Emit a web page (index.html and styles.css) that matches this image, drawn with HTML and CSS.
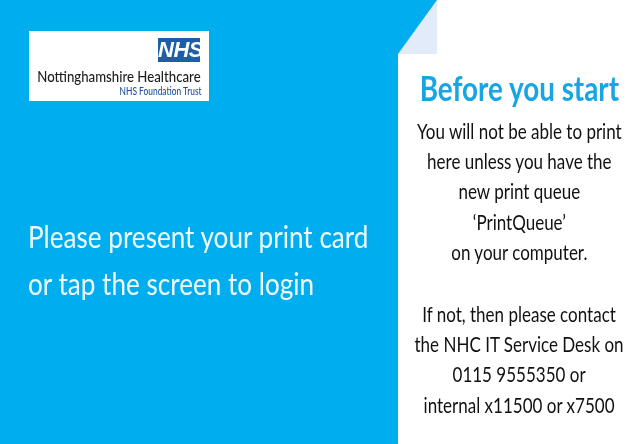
FILE: index.html
```html
<!DOCTYPE html>
<html lang="en">
<head>
<meta charset="utf-8">
<title>Print login</title>
<link rel="stylesheet" href="styles.css">
</head>
<body>
<main class="screen">
  <section class="login">
    <div class="logo">
      <div class="nhs-badge">NHS</div>
      <div class="logo-name">Nottinghamshire Healthcare</div>
      <div class="logo-sub">NHS Foundation Trust</div>
    </div>
    <p class="prompt">Please present your print card<br>or tap the screen to login</p>
  </section>
  <aside class="notice">
    <svg class="fold" width="39" height="54" viewBox="0 0 39 54" aria-hidden="true">
      <rect width="39" height="54" fill="#e2ebfa"/>
      <polygon points="0,0 39,0 0,54" fill="#00aeef"/>
    </svg>
    <h1 class="notice-title">Before you start</h1>
    <p class="notice-text">You will not be able to print<br>here unless you have the<br>new print queue<br>‘PrintQueue’<br>on your computer.</p>
    <p class="notice-text notice-gap">If not, then please contact<br>the NHC IT Service Desk on<br>0115 9555350 or<br>internal x11500 or x7500</p>
  </aside>
</main>
</body>
</html>
```
FILE: styles.css
```css
html, body {
  margin: 0;
  padding: 0;
  background: #fff;
}
.screen {
  display: grid;
  grid-template-columns: 398px 242px;
  width: 640px;
  height: 444px;
  overflow: hidden;
  font-family: Lato, "Open Sans", sans-serif;
  filter: blur(0.35px);
}
.login {
  background: #00aeef;
  padding: 31px 0 0 28px;
}
.logo {
  display: flex;
  flex-direction: column;
  align-items: flex-end;
  box-sizing: border-box;
  width: 180px;
  height: 70px;
  margin-left: 1px;
  padding: 7px 9px 0 0;
  background: #fff;
}
.nhs-badge {
  width: 42px;
  height: 24px;
  background: #1c5fa8;
  color: #fff;
  font: italic 700 22px/24px "Liberation Sans", sans-serif;
  text-align: center;
  letter-spacing: -0.5px;
}
.logo-name {
  margin: 6px -1px 0 0;
  color: #1e1e1e;
  font-size: 15px;
  font-weight: 500;
  line-height: 17px;
  white-space: nowrap;
  transform: scaleX(0.88);
  transform-origin: right center;
}
.logo-sub {
  margin: -1px -2px 0 0;
  color: #1c4f94;
  font-size: 10.5px;
  font-weight: 500;
  line-height: 14px;
  white-space: nowrap;
  transform: scaleX(0.8);
  transform-origin: right center;
}
.prompt {
  margin: 112px 0 0;
  color: #eefaff;
  font-size: 30px;
  line-height: 47px;
  white-space: nowrap;
  transform: scaleX(0.87);
  transform-origin: left center;
}
.notice {
  display: flex;
  flex-direction: column;
  align-items: center;
  background: #fff;
  color: #111;
}
.fold {
  align-self: flex-start;
  flex: none;
}
.notice-title {
  margin: 10px 0 0;
  color: #17a6e3;
  font-size: 35px;
  font-weight: 700;
  line-height: 46px;
  white-space: nowrap;
  transform: scaleX(0.795);
}
.notice-text {
  margin: 6px 0 0;
  font-size: 21px;
  line-height: 30.2px;
  text-align: center;
  white-space: nowrap;
  transform: scaleX(0.81);
}
.notice-gap {
  margin-top: 32px;
}
```
